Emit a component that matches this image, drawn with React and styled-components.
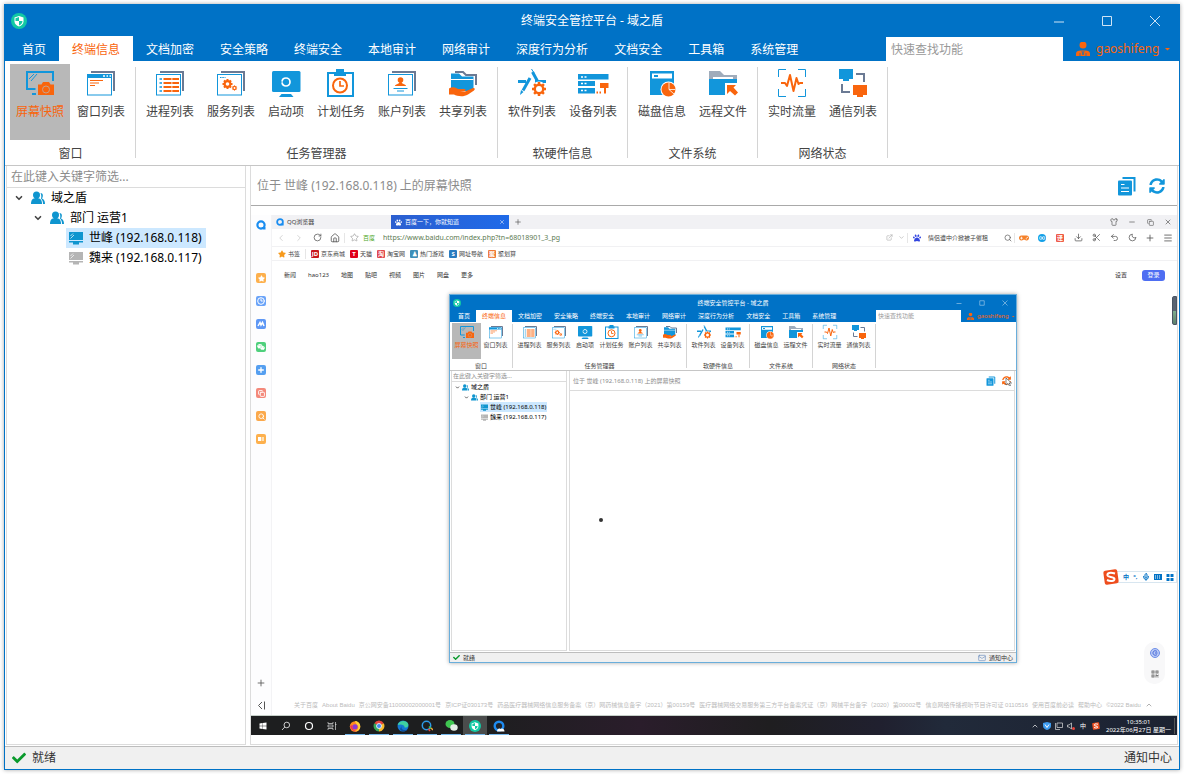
import React from 'react';
import styled, { createGlobalStyle, css, ThemeProvider } from 'styled-components';
import {
    ChevronDown, ChevronLeft, ChevronRight, ChevronUp, Clock3, Copy, Download, ExternalLink, House, Mail,
    Menu, Mic, Minus, Moon, Plus, RotateCw, Scissors, Search, Shirt, Star, Undo2, X,
} from 'lucide-react';
import { FaCheck, FaGamepad, FaPaw, FaQrcode, FaStar, FaSyncAlt, FaWeixin, FaWindows } from 'react-icons/fa';

const BLUE = '#0072c6';
const ICON = '#1296db';
const ORANGE = '#f9650d';
const SLATE = '#6b7a94';

const GlobalStyle = createGlobalStyle`
    * {
        box-sizing: border-box;
    }

    body {
        margin: 0;
        background: #fff;
    }

    body, button, input {
        font-family: "Noto Sans", "Noto Sans CJK SC", sans-serif;
    }

    svg {
        display: block;
        flex: none;
    }
`;

// the real window
const full = {
    font: 12, line: 16, frame: BLUE,
    titleHeight: 31, control: 48, controlIcon: 12, logo: 16, logoPad: 6,
    tabHeight: 25, tabPad: '2px 13px 0', tabStart: 4, search: 177, searchHeight: 24, searchPad: 5,
    user: 116, userPad: 13, userIcon: 14, userGap: 6,
    ribbonPad: '3px 5px', button: 60, buttonNarrow: 48, buttonHeight: 76, buttonGap: 1,
    buttonPad: 5, buttonIcon: 28, labelGap: 7, captionGap: 6, divider: '3px 4px 4px',
    side: 240, sideGap: 4, filter: 21, filterPad: 4,
    row: 20, indent: [7, 26, 59], leafPad: '0 4px 0 3px', chevron: 10, chevronGap: 7, nodeIcon: 14, nodeGap: 6,
    header: 39, headerPad: '0 12px 0 6px', headerLine: '#a9a9a9', headerGap: 12, copy: 20, refresh: 16,
    status: 22, statusPad: 7, check: 14, statusGap: 6,
};

// the same window as it shows up inside the captured desktop
const mini = {
    font: 6, line: 8, frame: '#6aaedb',
    titleHeight: 15, control: 23, controlIcon: 6, logo: 8, logoPad: 3,
    tabHeight: 12, tabPad: '0 6px', tabStart: 2, search: 85, searchHeight: 12, searchPad: 2,
    user: 55, userPad: 6, userIcon: 7, userGap: 3,
    ribbonPad: '1px 2px 0', button: 29, buttonNarrow: 24, buttonHeight: 36, buttonGap: 0,
    buttonPad: 2, buttonIcon: 14, labelGap: 2, captionGap: 3, divider: '1px 2px 2px',
    side: 116, sideGap: 2, filter: 10, filterPad: 1,
    row: 10, indent: [3, 12, 28], leafPad: '0 1px', chevron: 5, chevronGap: 2, nodeIcon: 7, nodeGap: 2,
    header: 19, headerPad: '0 3px', headerLine: '#dcdcdc', headerGap: 6, copy: 10, refresh: 9,
    status: 9, statusPad: 3, check: 7, statusGap: 3,
};

const PlainButton = styled.button`
    display: flex;
    align-items: center;
    justify-content: center;
    padding: 0;
    border: 0;
    background: none;
    color: inherit;
    font-size: inherit;
    line-height: inherit;
    white-space: nowrap;
    cursor: pointer;
`;

/* ---------- window frame ---------- */

const Shell = styled.div`
    display: flex;
    min-height: 100vh;
    padding: 4px;
`;

const Window = styled.div`
    display: flex;
    flex: 1;
    flex-direction: column;
    min-width: 0;
    height: 100%;
    border: 1px solid ${props => props.theme.frame};
    background: #fff;
    color: #444;
    font-size: ${props => props.theme.font}px;
    line-height: ${props => props.theme.line}px;
    box-shadow: 0 0 4px rgba(0, 0, 0, 0.35);
`;

const OuterWindow = styled(Window)`
    height: auto;
`;

const TitleBar = styled.header`
    display: grid;
    grid-template-columns: 1fr auto 1fr;
    align-items: center;
    height: ${props => props.theme.titleHeight}px;
    background: ${BLUE};
    color: #fff;
`;

const LogoSlot = styled.div`
    padding-left: ${props => props.theme.logoPad}px;
`;

const WindowControls = styled.div`
    display: flex;
    justify-content: flex-end;
`;

const ControlButton = styled(PlainButton)`
    width: ${props => props.theme.control}px;
    height: ${props => props.theme.titleHeight}px;
`;

const TabBar = styled.div`
    display: flex;
    align-items: flex-end;
    height: ${props => props.theme.tabHeight}px;
    background: ${BLUE};
    color: #fff;
`;

const Tabs = styled.nav`
    display: flex;
    flex: 1;
    min-width: 0;
    padding-left: ${props => props.theme.tabStart}px;
`;

const Tab = styled(PlainButton)`
    height: ${props => props.theme.tabHeight}px;
    padding: ${props => props.theme.tabPad};
    background: ${props => props.$active ? '#fff' : 'transparent'};
    color: ${props => props.$active ? ORANGE : '#fff'};
`;

const SearchInput = styled.input`
    width: ${props => props.theme.search}px;
    height: ${props => props.theme.searchHeight}px;
    padding: 0 ${props => props.theme.searchPad}px;
    border: 0;
    background: #fff;
    font-size: inherit;

    &::placeholder {
        color: #999;
    }
`;

const UserButton = styled(PlainButton)`
    justify-content: flex-start;
    gap: ${props => props.theme.userGap}px;
    width: ${props => props.theme.user}px;
    height: ${props => props.theme.tabHeight}px;
    padding-left: ${props => props.theme.userPad}px;
    color: ${ORANGE};
`;

/* ---------- ribbon ---------- */

const RibbonBar = styled.div`
    display: flex;
    padding: ${props => props.theme.ribbonPad};
    border-bottom: 1px solid #c6c6c6;
`;

const Group = styled.section`
    display: flex;
    flex-direction: column;
    align-items: center;
    gap: ${props => props.theme.captionGap}px;
`;

const GroupButtons = styled.div`
    display: flex;
    gap: ${props => props.theme.buttonGap}px;
`;

const Divider = styled.div`
    width: 1px;
    margin: ${props => props.theme.divider};
    background: #d4d4d4;
`;

const RibbonButton = styled(PlainButton)`
    flex-direction: column;
    justify-content: flex-start;
    gap: ${props => props.theme.labelGap}px;
    width: ${props => props.$narrow ? props.theme.buttonNarrow : props.theme.button}px;
    height: ${props => props.theme.buttonHeight}px;
    padding-top: ${props => props.theme.buttonPad}px;
    background: ${props => props.$active ? '#b8b8b8' : 'transparent'};
    color: ${props => props.$active ? ORANGE : '#444'};

    svg {
        width: ${props => props.theme.buttonIcon}px;
        height: ${props => props.theme.buttonIcon}px;
        overflow: visible;
    }
`;

/* ---------- body ---------- */

const Body = styled.div`
    display: flex;
    flex: 1;
    gap: ${props => props.theme.sideGap}px;
    min-height: 0;
    padding: 0 1px 1px;
`;

const panel = css`
    display: flex;
    flex-direction: column;
    border: 1px solid #dcdcdc;
    border-top: 0;
`;

const SidePanel = styled.aside`
    ${panel}
    width: ${props => props.theme.side}px;
`;

const MainPanel = styled.main`
    ${panel}
    flex: 1;
    min-width: 0;
`;

const FilterInput = styled.input`
    height: ${props => props.theme.filter + 1}px;
    padding: 0 ${props => props.theme.filterPad}px;
    border: 0;
    border-bottom: 1px solid #dcdcdc;
    font-size: inherit;

    &::placeholder {
        color: #8c8c8c;
    }
`;

const Tree = styled.ul`
    display: flex;
    flex-direction: column;
    align-items: flex-start;
    margin: 0;
    padding: 0;
    list-style: none;
`;

const Node = styled(PlainButton)`
    gap: ${props => props.theme.nodeGap}px;
    height: ${props => props.theme.row}px;
    margin-left: ${props => props.theme.indent[props.$depth]}px;
    padding: ${props => props.$depth === 2 ? props.theme.leafPad : 0};
    background: ${props => props.$selected ? '#cce8ff' : 'transparent'};
    color: #000;
`;

const Arrow = styled.span`
    display: flex;
    margin-right: ${props => props.theme.chevronGap - props.theme.nodeGap}px;
    color: #444;
`;

const PanelHeader = styled.div`
    display: flex;
    align-items: center;
    gap: ${props => props.theme.headerGap}px;
    height: ${props => props.theme.header + 1}px;
    padding: ${props => props.theme.headerPad};
    border-bottom: 1px solid ${props => props.theme.headerLine};
    color: #8c8c8c;
`;

const PanelTitle = styled.span`
    flex: 1;
    white-space: nowrap;
`;

const HeaderButton = styled(PlainButton)`
    color: ${props => props.$hot ? ORANGE : ICON};
`;

const StatusBar = styled.footer`
    display: flex;
    align-items: center;
    gap: ${props => props.theme.statusGap}px;
    height: ${props => props.theme.status + 1}px;
    padding: 0 ${props => props.theme.statusPad}px;
    border-top: 1px solid #bdbdbd;
    background: #f0f0f0;
    color: #333;
`;

const StatusText = styled.span`
    flex: 1;
`;

const Notice = styled(PlainButton)`
    gap: ${props => props.theme.statusGap}px;
`;

/* ---------- captured desktop ---------- */

const Desktop = styled.div`
    position: relative;
    display: flex;
    flex: 1;
    flex-direction: column;
    min-height: 0;
    margin: 9px 0;
    overflow: hidden;
    color: #444;
    font-size: 6px;
    line-height: 8px;
`;

const Browser = styled.div`
    display: flex;
    flex: 1;
    min-height: 0;
`;

const BrowserSide = styled.div`
    display: flex;
    flex-direction: column;
    align-items: center;
    gap: 13px;
    width: 21px;
    padding: 5px 0;
    border-right: 1px solid #f3f3f5;
    background: #fdfdfe;
`;

const SideSpacer = styled.div`
    flex: ${props => props.$grow ? 1 : 'none'};
    height: 17px;
`;

const SideApp = styled(PlainButton)`
    width: 10px;
    height: 10px;
    border-radius: 2px;
    background: ${props => props.$color};
    color: #fff;
`;

const BrowserMain = styled.div`
    display: flex;
    flex: 1;
    flex-direction: column;
    min-width: 0;
`;

const BrowserTabs = styled.div`
    display: flex;
    align-items: center;
    height: 14px;
    padding-left: 4px;
    background: #f1f1f4;
`;

const BrowserTab = styled(PlainButton)`
    justify-content: flex-start;
    gap: 3px;
    width: ${props => props.$active ? 118 : 115}px;
    height: 14px;
    padding: 0 4px 0 ${props => props.$active ? 4 : 0}px;
    background: ${props => props.$active ? 'linear-gradient(90deg, #2c5fd0, #1f6ae8)' : 'none'};
    color: ${props => props.$active ? '#fff' : '#444'};

    span {
        flex: 1;
        text-align: left;
    }
`;

const Cell = styled(PlainButton)`
    width: ${props => props.$w || 18}px;
    height: 14px;
    color: ${props => props.$color || '#555'};
`;

const Grow = styled.div`
    flex: 1;
`;

const ToolRow = styled.div`
    display: flex;
    align-items: center;
    height: ${props => props.$h}px;
    border-bottom: 1px solid #f1f1f3;
`;

const Bar = styled.div`
    width: 1px;
    height: 10px;
    background: #e6e6e6;
`;

const Site = styled.span`
    width: 18px;
    color: #52a92c;
`;

const Address = styled.input`
    flex: 1;
    min-width: 0;
    padding: 0 2px;
    border: 0;
    background: none;
    color: #5c7a52;
    font-size: 7px;
`;

const HotSearch = styled(Address)`
    flex: none;
    width: 76px;
    color: #444;
    font-size: 6px;
`;

const Bookmarks = styled(ToolRow)`
    gap: 5px;
    padding-left: 6px;
`;

const Bookmark = styled.a`
    display: flex;
    align-items: center;
    gap: 2px;
    color: #444;
    text-decoration: none;
    white-space: nowrap;
`;

const Badge = styled.span`
    display: flex;
    align-items: center;
    justify-content: center;
    width: 8px;
    height: 8px;
    border-radius: ${props => props.$round ? 4 : 1}px;
    background: ${props => props.$color};
    color: #fff;
    font-weight: bold;
`;

const SiteNav = styled.nav`
    display: flex;
    align-items: center;
    gap: 12px;
    height: 28px;
    padding: 0 12px;
`;

const Link = styled.a`
    color: ${props => props.$muted ? '#bbb' : '#333'};
    text-decoration: none;
    white-space: nowrap;
`;

const Login = styled(PlainButton)`
    width: 23px;
    height: 11px;
    margin-left: 3px;
    border-radius: 3px;
    background: #4e6ef2;
    color: #fff;
`;

const SiteFooter = styled.footer`
    display: flex;
    align-items: center;
    justify-content: space-between;
    height: 20px;
    padding: 0 24px 0 22px;
    color: #bbb;
    font-family: "Liberation Sans", "Noto Sans CJK SC", sans-serif;
`;

const MiniWindow = styled.div`
    position: absolute;
    top: 79px;
    left: 198px;
    width: 568px;
    height: 369px;
`;

const MouseArrow = styled.span`
    position: absolute;
    top: 84px;
    right: 4px;
`;

const BusyDot = styled.span`
    position: absolute;
    top: 224px;
    left: 150px;
    width: 4px;
    height: 4px;
    border-radius: 50%;
    background: #333;
`;

const ImeBar = styled.div`
    position: absolute;
    top: 356px;
    right: 0;
    display: flex;
    align-items: center;
    justify-content: space-around;
    width: 62px;
    height: 12px;
    padding-left: 5px;
    border: 1px solid #d8e6f0;
    background: #fff;
    color: ${BLUE};
    font-weight: bold;

    > svg:first-child {
        position: absolute;
        top: -3px;
        left: -13px;
    }
`;

const FloatTools = styled.div`
    position: absolute;
    right: 12px;
    bottom: 51px;
    display: flex;
    flex-direction: column;
    align-items: center;
    justify-content: space-around;
    width: 21px;
    height: 42px;
    border-radius: 10px;
    background: #f8f8f9;
    color: #777;
`;

const EdgeHandle = styled.div`
    position: absolute;
    top: 81px;
    right: 0;
    width: 5px;
    height: 29px;
    border: 1px solid #4b5563;
    border-radius: 2px 0 0 2px;
    background: linear-gradient(#5a6472 50%, #7fae8f 51%, #5d7f6c);
`;

const Taskbar = styled.div`
    display: flex;
    align-items: center;
    height: 20px;
    border-top: 1px solid #c5cfc8;
    background: linear-gradient(90deg, #1d1e1f 25%, #2a1d2b 42%, #1f1e20 56%, #20202f 68%, #212a3a 75%, #1c2231);
    color: #fff;
`;

const TaskGroup = styled.div`
    display: flex;
`;

const Task = styled(PlainButton)`
    width: ${props => props.$open ? 24 : 23}px;
    height: 19px;
    border: 0 solid ${props => props.$active ? '#4a4c4c' : 'transparent'};
    border-width: 0 2px;
    background: ${props => props.$active ? '#4a4c4c' : 'none'};
    box-shadow: ${props => props.$open ? 'inset 0 -1px #76b9ed' : 'none'};
`;

const Clock = styled.div`
    width: 72px;
    margin-right: 2px;
    border-right: 1px solid #555;
    text-align: center;
    white-space: nowrap;
`;

/* ---------- drawings ---------- */

const Svg = ({ children, size = 28, box = 28 }) => (
    <svg width={size} height={size} viewBox={`0 0 ${box} ${box}`} fill="none" aria-hidden="true">{children}</svg>
);

const Sheet = () => (
    <>
        <path d="M4 3H27V22" stroke={SLATE} strokeWidth="2" />
        <rect x="0.5" y="5.5" width="24" height="20.5" fill="#fff" stroke={ICON} />
    </>
);

const Gear = ({ cx, cy, r, hole, width = 2 }) => (
    <g stroke={ORANGE} fill={ORANGE}>
        {[0, 45, 90, 135].map(angle => (
            <path key={angle} d={`M${cx - r} ${cy}H${cx + r}`} strokeWidth={width} transform={`rotate(${angle} ${cx} ${cy})`} />
        ))}
        <circle cx={cx} cy={cy} r={r * 0.78} stroke="none" />
        <circle cx={cx} cy={cy} r={hole} fill="#fff" stroke="none" />
    </g>
);

const drawings = {
    snapshot: (
        <>
            <path d="M9.500 20H1V3H27V12" stroke={ICON} strokeWidth="2" />
            <path d="M3 10L8 5M5 12L11 5" stroke={ICON} />
            <path d="M6 25H10" stroke={ICON} strokeWidth="2" />
            <path d="M12 15.500H15.500L17 13H23L24.500 15.500H28V26H12Z" fill={ORANGE} />
            <circle cx="20" cy="20.500" r="3.500" stroke="#c8a28b" />
        </>
    ),
    windows: (
        <>
            <Sheet />
            <path d="M0 5H25V9H0Z" fill={ICON} />
            <path d="M16 7H18M19.500 7H21M22.500 7H24" stroke="#fff" strokeWidth="1.500" />
            <path d="M3 11.500H16M3 14H12M3 16.500H8" stroke={ORANGE} />
        </>
    ),
    process: (
        <>
            <Sheet />
            <path d="M7.500 10H23M7.500 14H23M7.500 18H23M7.500 22H23" stroke={ORANGE} strokeWidth="2.200" strokeDasharray="8 0.800 7 9" />
            <path d="M3.500 10H6M3.500 14H6M3.500 18H6M3.500 22H6" stroke={ICON} strokeWidth="1.500" />
        </>
    ),
    service: (
        <>
            <Sheet />
            <path d="M3 8.500H8.500" stroke={ICON} strokeDasharray="1.500 0.800" />
            <Gear cx={10.500} cy={15} r={5} hole={1.800} />
            <Gear cx={17.500} cy={19} r={2.600} hole={0.900} width={1} />
        </>
    ),
    startup: (
        <>
            <rect y="2" width="28.500" height="21" rx="1.500" fill={ICON} />
            <circle cx="14" cy="13" r="4" stroke="#fff" strokeWidth="1.700" strokeDasharray="11.800 0.800" />
            <path d="M9.500 25H19L21.500 28H7Z" fill={ICON} />
        </>
    ),
    schedule: (
        <>
            <rect x="1" y="4" width="25" height="23" stroke={ICON} strokeWidth="2" />
            <path d="M9 0H17V3H19V7H7V3H9Z" fill={ICON} />
            <circle cx="13" cy="16.500" r="7" fill="#fff" stroke={ORANGE} strokeWidth="2" />
            <path d="M13 12V17H17" stroke={ORANGE} strokeWidth="1.700" />
        </>
    ),
    account: (
        <>
            <Sheet />
            <circle cx="12.500" cy="11" r="2.800" fill={ORANGE} />
            <path d="M7 17C7 15 11 15.500 11.500 13H13.500C14 15.500 18 15 18 17Z" fill={ORANGE} />
            <path d="M5.500 19.500H19.500M9 22H16" stroke={ICON} />
        </>
    ),
    share: (
        <>
            <path d="M6 3H14L17 6H27V16" stroke={SLATE} strokeWidth="2" />
            <path d="M2 4.500H10L13 7.500H24.500V20L20 22H2Z" fill={ICON} />
            <path d="M2 10.500H24.500" stroke="#fff" />
            <path d="M0 19.500C3 17.500 6 18 9 20H15C17 20 17 22 15 22H11L16 22.500L23 19.500C25 18.500 27 19.500 25 21.500L19 25.500C14 28.500 8 27 5 25.500H0Z" fill={ORANGE} />
        </>
    ),
    software: (
        <>
            <path d="M14.500 3L21 15M0 12.500H8M17 12.500H28" stroke={ICON} strokeWidth="3" />
            <path d="M13.500 0L16 4" stroke={ICON} />
            <path d="M12 9L5 21.500" stroke={ICON} strokeWidth="3" />
            <path d="M3 21L5.500 23L2 26Z" fill={ICON} />
            <circle cx="21" cy="20" r="7.500" fill="#fff" />
            <Gear cx={21} cy={20} r={7} hole={3} width={2.500} />
        </>
    ),
    device: (
        <>
            <path d="M-1 5H29.500V10.500H-1ZM-1 12H16V17H-1ZM-1 19H16V24.500H-1Z" fill={ICON} />
            <path d="M2 8H4M5.500 8H7.500M2 14.500H4M5.500 14.500H7.500M2 21.500H4M5.500 21.500H7.500" stroke="#fff" strokeWidth="1.500" />
            <path d="M21 14H29.500V19H21Z" fill={ORANGE} />
            <path d="M26 19V24.500M17.500 23.500H19M20.500 23.500H22" stroke={ORANGE} strokeWidth="2" />
        </>
    ),
    disk: (
        <>
            <path d="M2 2H26V26H2Z" fill={ICON} />
            <path d="M4 4.500H24V9.500H4Z" fill="#fff" />
            <path d="M6 7H10" stroke={ICON} strokeWidth="2" />
            <circle cx="20.500" cy="20.500" r="8" fill="#fff" />
            <circle cx="20.500" cy="20.500" r="7" fill={ORANGE} />
            <path d="M21 13.500V20.500H27.500M21 20.500L26 25" stroke="#fff" strokeWidth="0.800" />
        </>
    ),
    remote: (
        <>
            <path d="M0 2H11L15 6H28V10H0Z" fill="#a0acbb" />
            <path d="M4 8H24V10H4Z" fill="#fff" />
            <path d="M0 10H28V26H0Z" fill={ICON} />
            <path d="M16 14H28V28H16Z" fill="#fff" />
            <path d="M18 16H27L24.500 18.500L29 23.500L26 26.500L21 22L18 25Z" fill={ORANGE} />
        </>
    ),
    traffic: (
        <>
            <path d="M0.500 8V0.500H8M20 0.500H27.500V8M27.500 20V27.500H20M8 27.500H0.500V20" stroke={ICON} />
            <path d="M3 14H7L9 17L12 6L15.500 22L18.500 9L20.500 15L22 14H25" stroke={ORANGE} strokeWidth="2" strokeLinejoin="round" />
        </>
    ),
    network: (
        <>
            <path d="M0 0H14V10H0ZM4 10H10V12H4Z" fill={ICON} />
            <path d="M14 16H28V26H14ZM18 26H24V28H18Z" fill={ORANGE} />
            <path d="M17 5H25V13M3 15V23H11" stroke={SLATE} strokeWidth="2" />
        </>
    ),
};

const Logo = ({ size }) => (
    <Svg size={size} box={16}>
        <circle cx="8" cy="8" r="8" fill="#12c9a4" />
        <path d="M8 3L12.500 4.500V8.500C12.500 11 10.500 12.500 8 13.500C5.500 12.500 3.500 11 3.500 8.500V4.500Z" fill="#fff" />
        <path d="M8 4L4.500 5.200V8H8ZM8 8H11.500C11.500 10.500 10 11.500 8 12.400Z" fill="#12c9a4" />
    </Svg>
);

const UserIcon = ({ size }) => (
    <Svg size={size} box={14}>
        <circle cx="7" cy="3" r="3.500" fill={ORANGE} />
        <path d="M0 14.500V11.500C0 9.500 2 8.500 4.500 8.500H9.500C12 8.500 14 9.500 14 11.500V14.500Z" fill={ORANGE} />
        <path d="M4 14.500V11M10 14.500V11M6 9L7 13L8 9" stroke={BLUE} strokeWidth="0.700" />
    </Svg>
);

const CaretIcon = ({ size }) => (
    <Svg size={size} box={6}>
        <path d="M0 2H5L2.500 4.500Z" fill={ORANGE} />
    </Svg>
);

const PeopleIcon = ({ size }) => (
    <Svg size={size} box={14}>
        <circle cx="5.500" cy="4" r="3.500" fill="#0f95cf" />
        <path d="M0 13C0 9 1.500 7 5.500 7C9.500 7 11 9 11 13Z" fill="#0f95cf" />
        <path d="M9.500 2C12 2 12.500 5 11 7.500C13 8.500 14 10 14 13H12C12 10.500 11.500 9 10 7.500C10.500 6 10.500 4 9.500 2Z" fill="#0f95cf" />
    </Svg>
);

const ComputerIcon = ({ size, color }) => (
    <Svg size={size} box={14}>
        <path d="M0 1H14V9H0ZM0 10H14V11.500H0ZM4 11.500H10V13.500H4Z" fill={color} />
        <path d="M1.500 5L4 2.500M1.500 7.500L5 4" stroke="#fff" strokeWidth="0.700" />
    </Svg>
);

const CopyIcon = ({ size }) => (
    <Svg size={size} box={20}>
        <path d="M5.500 2H17.500V15.500" stroke={ICON} strokeWidth="2" />
        <rect x="1" y="4.500" width="14" height="15" rx="1" fill={ICON} />
        <path d="M4 8.500H7.500M4 12H12M4 15.500H12" stroke="#fff" />
    </Svg>
);

const BigQ = ({ size = 8, color = '#1a8df0' }) => (
    <Svg size={size} box={10}>
        <circle cx="5" cy="5" r="3.600" stroke={color} strokeWidth="2.200" />
        <path d="M5.500 7H9.500V9.500H7Z" fill={color} />
    </Svg>
);

const SogouIcon = ({ size }) => (
    <Svg size={size} box={16}>
        <rect x="1" y="1" width="14" height="14" rx="2" fill="#ee4d1d" transform="rotate(-8 8 8)" />
        <path d="M12 4.500C7 3 4 4 4.500 6.500C5 8.500 11 7.500 11.500 10C11.800 12.300 7 12.500 4 11" stroke="#fff" strokeWidth="2" />
    </Svg>
);

const FirefoxIcon = () => (
    <Svg size={12} box={12}>
        <circle cx="6" cy="6.500" r="5.200" fill="#ff8a1e" />
        <path d="M6 1C9 1 11.500 3.500 11.300 7C11 10 8 12 5 11.500C8 11 10 8.500 9 6C8.500 4.500 6.500 3.500 6 1Z" fill="#ffcf3a" />
        <circle cx="6" cy="6.800" r="2.600" fill="#8a3ad8" />
        <path d="M1 6C2 10 5 12 8 11.300C4.500 11 3 8 3.500 5Z" fill="#f0335c" />
    </Svg>
);

const ChromeIcon = () => (
    <Svg size={12} box={12}>
        <path d="M6 6L1.300 3.300A5.400 5.400 0 0 1 10.700 3.300Z" fill="#e8453c" />
        <path d="M6 6L10.700 3.300A5.400 5.400 0 0 1 6 11.400Z" fill="#f9bb2d" />
        <path d="M6 6L6 11.400A5.400 5.400 0 0 1 1.300 3.300Z" fill="#3aa757" />
        <circle cx="6" cy="6" r="2.500" fill="#4688f1" stroke="#fff" strokeWidth="0.800" />
    </Svg>
);

const EdgeIcon = () => (
    <Svg size={12} box={12}>
        <circle cx="6" cy="6" r="5.500" fill="#1478d4" />
        <path d="M0.700 5C1.500 1 9 -1 11.200 4C12 7 9 8 7.500 7.500C8 5 4 3.500 0.700 5Z" fill="#3fd0a0" />
        <path d="M5 5.500C3 9 6.500 11 10.500 9.500C8.500 12 4 12 3 9Z" fill="#0b4f9e" />
    </Svg>
);

const WechatIcon = () => (
    <Svg size={13} box={13}>
        <ellipse cx="5" cy="5" rx="4.500" ry="4" fill="#3fc651" />
        <ellipse cx="9" cy="8.500" rx="3.700" ry="3.200" fill="#e4eee6" />
    </Svg>
);

const CloudQ = () => (
    <Svg size={12} box={12}>
        <circle cx="6" cy="6" r="4.300" fill="#20242a" stroke="#1e8bf0" strokeWidth="2.400" />
        <path d="M4 11.500C4 9 6 8 7.500 9C9 7.500 11.500 9 11.500 11.500Z" fill="#fff" />
    </Svg>
);

const SpyQ = () => (
    <Svg size={12} box={12}>
        <circle cx="5.500" cy="5.500" r="4.200" stroke="#2d9be8" strokeWidth="1.500" />
        <path d="M8 6.500L10 8.500" stroke="#3fc651" strokeWidth="1.500" />
        <path d="M10 8L12 10" stroke="#f4a83a" strokeWidth="1.500" />
        <path d="M7.500 9L9 11" stroke="#e8453c" strokeWidth="1.500" />
    </Svg>
);

const CortanaIcon = () => (
    <Svg size={10} box={10}>
        <circle cx="5" cy="5" r="3.500" stroke="#fff" strokeWidth="1.200" />
    </Svg>
);

const TaskViewIcon = () => (
    <Svg size={10} box={10}>
        <path d="M1 1V2.500H6V1M1 9V7.500H6V9M1 4H6V6H1ZM8.500 1V9M8 3.500H9.500" stroke="#ddd" strokeWidth="0.700" />
    </Svg>
);

const MagnifierIcon = () => (
    <Svg size={10} box={10}>
        <circle cx="5.800" cy="4" r="2.800" stroke="#ddd" strokeWidth="0.900" />
        <path d="M3.800 6L1 9" stroke="#ddd" strokeWidth="0.900" />
    </Svg>
);

const ArrowPointer = () => (
    <Svg size={8} box={8}>
        <path d="M1 0V7L3 5.500L4.500 8L5.500 7.500L4.200 5H6.500Z" fill="#fff" stroke="#333" strokeWidth="0.600" />
    </Svg>
);

/* ---------- data ---------- */

const tabs = [
    '首页', '终端信息', '文档加密', '安全策略', '终端安全', '本地审计',
    '网络审计', '深度行为分析', '文档安全', '工具箱', '系统管理',
];

const groups = [
    { caption: '窗口', buttons: [['屏幕快照', 'snapshot'], ['窗口列表', 'windows']] },
    {
        caption: '任务管理器',
        buttons: [
            ['进程列表', 'process'], ['服务列表', 'service'], ['启动项', 'startup'],
            ['计划任务', 'schedule'], ['账户列表', 'account'], ['共享列表', 'share'],
        ],
    },
    { caption: '软硬件信息', buttons: [['软件列表', 'software'], ['设备列表', 'device']] },
    { caption: '文件系统', buttons: [['磁盘信息', 'disk'], ['远程文件', 'remote']] },
    { caption: '网络状态', buttons: [['实时流量', 'traffic'], ['通信列表', 'network']] },
];

const nodes = [
    { depth: 0, text: '域之盾' },
    { depth: 1, text: '部门 运营1' },
    { depth: 2, text: '世峰 (192.168.0.118)', online: true },
    { depth: 2, text: '魏来 (192.168.0.117)' },
];

const bookmarks = [
    ['京东商城', '#c8161d', 'JD'],
    ['天猫', '#e0001b', 'T'],
    ['淘宝网', '#e0474c', '淘'],
    ['热门游戏', '#3f8fb8', '♟'],
    ['网址导航', '#2a7cc0', 'S'],
    ['聚划算', '#ee7a38', '聚'],
];

const siteLinks = ['新闻', 'hao123', '地图', '贴吧', '视频', '图片', '网盘', '更多'];

const footerLinks = [
    '关于百度', 'About Baidu', '京公网安备11000002000001号', '京ICP证030173号',
    '药品医疗器械网络信息服务备案（京）网药械信息备字（2021）第00159号',
    '医疗器械网络交易服务第三方平台备案凭证（京）网械平台备字（2020）第00002号',
    '信息网络传播视听节目许可证 0110516', '使用百度前必读', '帮助中心', '©2022 Baidu',
];

const sideApps = [
    ['收藏', '#fdb04d', <FaStar size={7} />],
    ['历史', '#6aa3f8', <Clock3 size={8} strokeWidth={3} />],
    ['文库', '#5f98f5', <Svg size={8} box={8}><path d="M1 6L3 2.500L4 5L5.500 2.500L7 6" stroke="#fff" strokeWidth="1.500" /></Svg>],
    ['微信', '#4fd07c', <FaWeixin size={8} />],
    ['翻译', '#559ff0', <Plus size={8} strokeWidth={4} />],
    ['截图', '#f4897b', <Copy size={7} strokeWidth={3} />],
    ['搜索', '#fba94c', <Search size={7} strokeWidth={3} />],
    ['阅读', '#fdb04d', <Svg size={8} box={8}><path d="M1 2H4V6H1Z" fill="#fff" /><path d="M4.500 2H7V6H4.500Z" fill="#fde0b5" /></Svg>],
];

/* ---------- sections ---------- */

const Title = ({ t }) => (
    <TitleBar>
        <LogoSlot><Logo size={t.logo} /></LogoSlot>
        <span>终端安全管控平台 - 域之盾</span>
        <WindowControls>
            <ControlButton aria-label="最小化">
                <Svg size={t.controlIcon} box={12}><path d="M1 7H11" stroke="#cfe4f5" /></Svg>
            </ControlButton>
            <ControlButton aria-label="最大化">
                <Svg size={t.controlIcon} box={12}><path d="M1.500 1.500H10.500V10.500H1.500Z" stroke="#cfe4f5" /></Svg>
            </ControlButton>
            <ControlButton aria-label="关闭">
                <Svg size={t.controlIcon} box={12}><path d="M1 1L11 11M11 1L1 11" stroke="#cfe4f5" /></Svg>
            </ControlButton>
        </WindowControls>
    </TitleBar>
);

const Ribbon = () => (
    <RibbonBar>
        {groups.map(group => (
            <React.Fragment key={group.caption}>
                <Group>
                    <GroupButtons>
                        {group.buttons.map(([label, icon]) => (
                            <RibbonButton key={label} $active={icon === 'snapshot'} $narrow={label.length < 4}>
                                <Svg>{drawings[icon]}</Svg>
                                {label}
                            </RibbonButton>
                        ))}
                    </GroupButtons>
                    <span>{group.caption}</span>
                </Group>
                <Divider />
            </React.Fragment>
        ))}
    </RibbonBar>
);

const TreeNode = ({ t, node }) => {
    const leaf = node.depth === 2;

    return (
        <li>
            <Node $depth={node.depth} $selected={node.online}>
                {!leaf && <Arrow><ChevronDown size={t.chevron} strokeWidth={4} /></Arrow>}
                {leaf
                    ? <ComputerIcon size={t.nodeIcon} color={node.online ? '#0f95cf' : '#b5b5b5'} />
                    : <PeopleIcon size={t.nodeIcon} />}
                <span>{node.text}</span>
            </Node>
        </li>
    );
};

const ConsoleWindow = ({ t, frame: Frame, nested, children }) => (
    <ThemeProvider theme={t}>
        <Frame>
            <Title t={t} />
            <TabBar>
                <Tabs>
                    {tabs.map(tab => <Tab key={tab} $active={tab === '终端信息'}>{tab}</Tab>)}
                </Tabs>
                <SearchInput aria-label="快速查找功能" placeholder="快速查找功能" />
                <UserButton>
                    <UserIcon size={t.userIcon} />
                    gaoshifeng
                    <CaretIcon size={t.userGap} />
                </UserButton>
            </TabBar>
            <Ribbon />
            <Body>
                <SidePanel>
                    <FilterInput aria-label="筛选" placeholder="在此键入关键字筛选..." />
                    <Tree>
                        {nodes.map(node => <TreeNode key={node.text} t={t} node={node} />)}
                    </Tree>
                </SidePanel>
                <MainPanel>
                    <PanelHeader>
                        <PanelTitle>位于 世峰 (192.168.0.118) 上的屏幕快照</PanelTitle>
                        <HeaderButton aria-label="复制"><CopyIcon size={t.copy} /></HeaderButton>
                        <HeaderButton aria-label="刷新" $hot={nested}><FaSyncAlt size={t.refresh} /></HeaderButton>
                    </PanelHeader>
                    {children}
                </MainPanel>
            </Body>
            <StatusBar>
                <FaCheck size={t.check} color="#0a9a2c" />
                <StatusText>就绪</StatusText>
                <Notice>
                    {nested && <Mail size={8} color="#6f8fc0" />}
                    通知中心
                </Notice>
            </StatusBar>
        </Frame>
    </ThemeProvider>
);

const BrowserChrome = () => (
    <>
        <BrowserTabs>
            <BrowserTab><BigQ /><span>QQ浏览器</span></BrowserTab>
            <BrowserTab $active><FaPaw size={7} /><span>百度一下，你就知道</span><X size={6} /></BrowserTab>
            <Cell aria-label="新标签页"><Plus size={8} /></Cell>
            <Grow />
            <Cell aria-label="皮肤"><Shirt size={8} /></Cell>
            <Cell aria-label="最小化"><Minus size={8} /></Cell>
            <Cell aria-label="还原"><Copy size={7} /></Cell>
            <Cell aria-label="关闭"><X size={8} /></Cell>
        </BrowserTabs>
        <ToolRow $h={18}>
            <Cell aria-label="后退" $color="#ccc"><ChevronLeft size={10} /></Cell>
            <Cell aria-label="前进" $color="#ccc"><ChevronRight size={10} /></Cell>
            <Cell aria-label="重新加载"><RotateCw size={9} /></Cell>
            <Cell aria-label="主页"><House size={10} /></Cell>
            <Bar />
            <Cell aria-label="收藏"><Star size={9} strokeWidth={1} /></Cell>
            <Site>百度</Site>
            <Address aria-label="地址" defaultValue="https://www.baidu.com/index.php?tn=68018901_3_pg" />
            <Cell aria-label="分享" $w={12} $color="#aaa"><ExternalLink size={7} /></Cell>
            <Cell aria-label="展开" $w={12} $color="#aaa"><ChevronDown size={7} /></Cell>
            <Bar />
            <Cell aria-label="搜索引擎" $color="#3245df"><FaPaw size={8} /></Cell>
            <HotSearch aria-label="热搜" defaultValue="情侣遭中介掀被子催租" />
            <Cell aria-label="搜索" $w={12}><Search size={8} /></Cell>
            <Bar />
            <Cell aria-label="游戏" $color="#f5812a"><FaGamepad size={10} /></Cell>
            <Cell aria-label="网盘"><Badge $round $color="#14a0e8">∞</Badge></Cell>
            <Cell aria-label="翻译"><Badge $color="#ee5a45">译</Badge></Cell>
            <Cell aria-label="下载"><Download size={9} /></Cell>
            <Cell aria-label="截图"><Scissors size={9} /></Cell>
            <Cell aria-label="撤销"><Undo2 size={9} /></Cell>
            <Cell aria-label="夜间模式"><Moon size={9} /></Cell>
            <Cell aria-label="添加"><Plus size={10} /></Cell>
            <Cell aria-label="菜单"><Menu size={10} /></Cell>
        </ToolRow>
        <Bookmarks $h={14}>
            <Bookmark href="#"><FaStar size={8} color="#f79a1c" />书签</Bookmark>
            <Bar />
            {bookmarks.map(([label, color, mark]) => (
                <Bookmark key={label} href="#"><Badge $color={color}>{mark}</Badge>{label}</Bookmark>
            ))}
        </Bookmarks>
    </>
);

const DesktopTaskbar = () => (
    <Taskbar>
        <TaskGroup>
            <Task aria-label="开始"><FaWindows size={8} /></Task>
            <Task aria-label="搜索"><MagnifierIcon /></Task>
            <Task aria-label="Cortana"><CortanaIcon /></Task>
            <Task aria-label="任务视图"><TaskViewIcon /></Task>
            <Task aria-label="Firefox" $open><FirefoxIcon /></Task>
            <Task aria-label="Chrome" $open><ChromeIcon /></Task>
            <Task aria-label="Edge" $open><EdgeIcon /></Task>
            <Task aria-label="搜索助手" $open><SpyQ /></Task>
            <Task aria-label="微信" $open><WechatIcon /></Task>
            <Task aria-label="域之盾" $open $active><Logo size={12} /></Task>
            <Task aria-label="QQ浏览器" $open><CloudQ /></Task>
        </TaskGroup>
        <Grow />
        <Cell $w={12} $color="#fff" aria-label="更多"><ChevronUp size={8} /></Cell>
        <Cell $w={12} aria-label="安全">
            <Svg size={8} box={8}>
                <path d="M0 1L4 0L8 1V4C8 6 6 7.500 4 8C2 7.500 0 6 0 4Z" fill="#3d9bf0" />
                <path d="M2 2.500L4 5.500L6 2.500" stroke="#fff" />
            </Svg>
        </Cell>
        <Cell $w={12} aria-label="网络">
            <Svg size={8} box={8}><path d="M2 1H7.500V5.500H2ZM0.500 1V7.500H5" stroke="#ddd" strokeWidth="0.700" /></Svg>
        </Cell>
        <Cell $w={12} aria-label="音量">
            <Svg size={8} box={8}>
                <path d="M0.500 3H2L4.500 1V7L2 5H0.500Z" stroke="#ddd" strokeWidth="0.700" />
                <circle cx="6.500" cy="6.500" r="1.500" fill="#e8453c" />
            </Svg>
        </Cell>
        <Cell $w={12} $color="#fff" aria-label="输入法">中</Cell>
        <Cell $w={14} aria-label="搜狗"><SogouIcon size={8} /></Cell>
        <Clock>10:35:01<br />2022年06月27日 星期一</Clock>
    </Taskbar>
);

const CapturedDesktop = () => (
    <Desktop>
        <Browser>
            <BrowserSide>
                <BigQ size={10} />
                <SideSpacer />
                {sideApps.map(([label, color, icon]) => (
                    <SideApp key={label} aria-label={label} $color={color}>{icon}</SideApp>
                ))}
                <SideSpacer $grow />
                <Plus size={10} color="#555" />
                <Svg size={9} box={9}><path d="M5 1L1.500 4.500L5 8M7.500 0.500V8.500" stroke="#555" /></Svg>
            </BrowserSide>
            <BrowserMain>
                <BrowserChrome />
                <SiteNav>
                    {siteLinks.map(link => <Link key={link} href="#">{link}</Link>)}
                    <Grow />
                    <Link href="#">设置</Link>
                    <Login>登录</Login>
                </SiteNav>
                <Grow />
                <SiteFooter>
                    {footerLinks.map(link => <Link key={link} href="#" $muted>{link}</Link>)}
                    <ChevronUp size={8} color="#888" />
                </SiteFooter>
            </BrowserMain>
        </Browser>
        <DesktopTaskbar />
        <MiniWindow>
            <ConsoleWindow t={mini} frame={Window} nested />
            <MouseArrow><ArrowPointer /></MouseArrow>
            <BusyDot />
        </MiniWindow>
        <EdgeHandle />
        <ImeBar>
            <SogouIcon size={16} />
            <span>中</span>
            <span>°,</span>
            <Mic size={8} strokeWidth={3} />
            <Svg size={8} box={8}><path d="M0 1H8V7H0Z" fill={BLUE} /><path d="M1 3H7M1 5H7" stroke="#fff" strokeDasharray="1 1" /></Svg>
            <Svg size={8} box={8}><path d="M0.500 1H3.500V4H0.500ZM4.500 1H7.500V4H4.500ZM0.500 5H3.500V8H0.500ZM4.500 5H7.500V8H4.500Z" fill={BLUE} /></Svg>
        </ImeBar>
        <FloatTools>
            <Svg size={10} box={10}>
                <circle cx="5" cy="5" r="4.500" fill="#b9c9f5" stroke="#6f8fe8" />
                <path d="M7 3.500C5 2 3 3 3 5C3 7 5.500 8 7 6.500M5 5H7.500" stroke="#3c62d8" />
            </Svg>
            <FaQrcode size={8} />
        </FloatTools>
    </Desktop>
);

const App = () => (
    <>
        <GlobalStyle />
        <Shell>
            <ConsoleWindow t={full} frame={OuterWindow}>
                <CapturedDesktop />
            </ConsoleWindow>
        </Shell>
    </>
);

export default App;
